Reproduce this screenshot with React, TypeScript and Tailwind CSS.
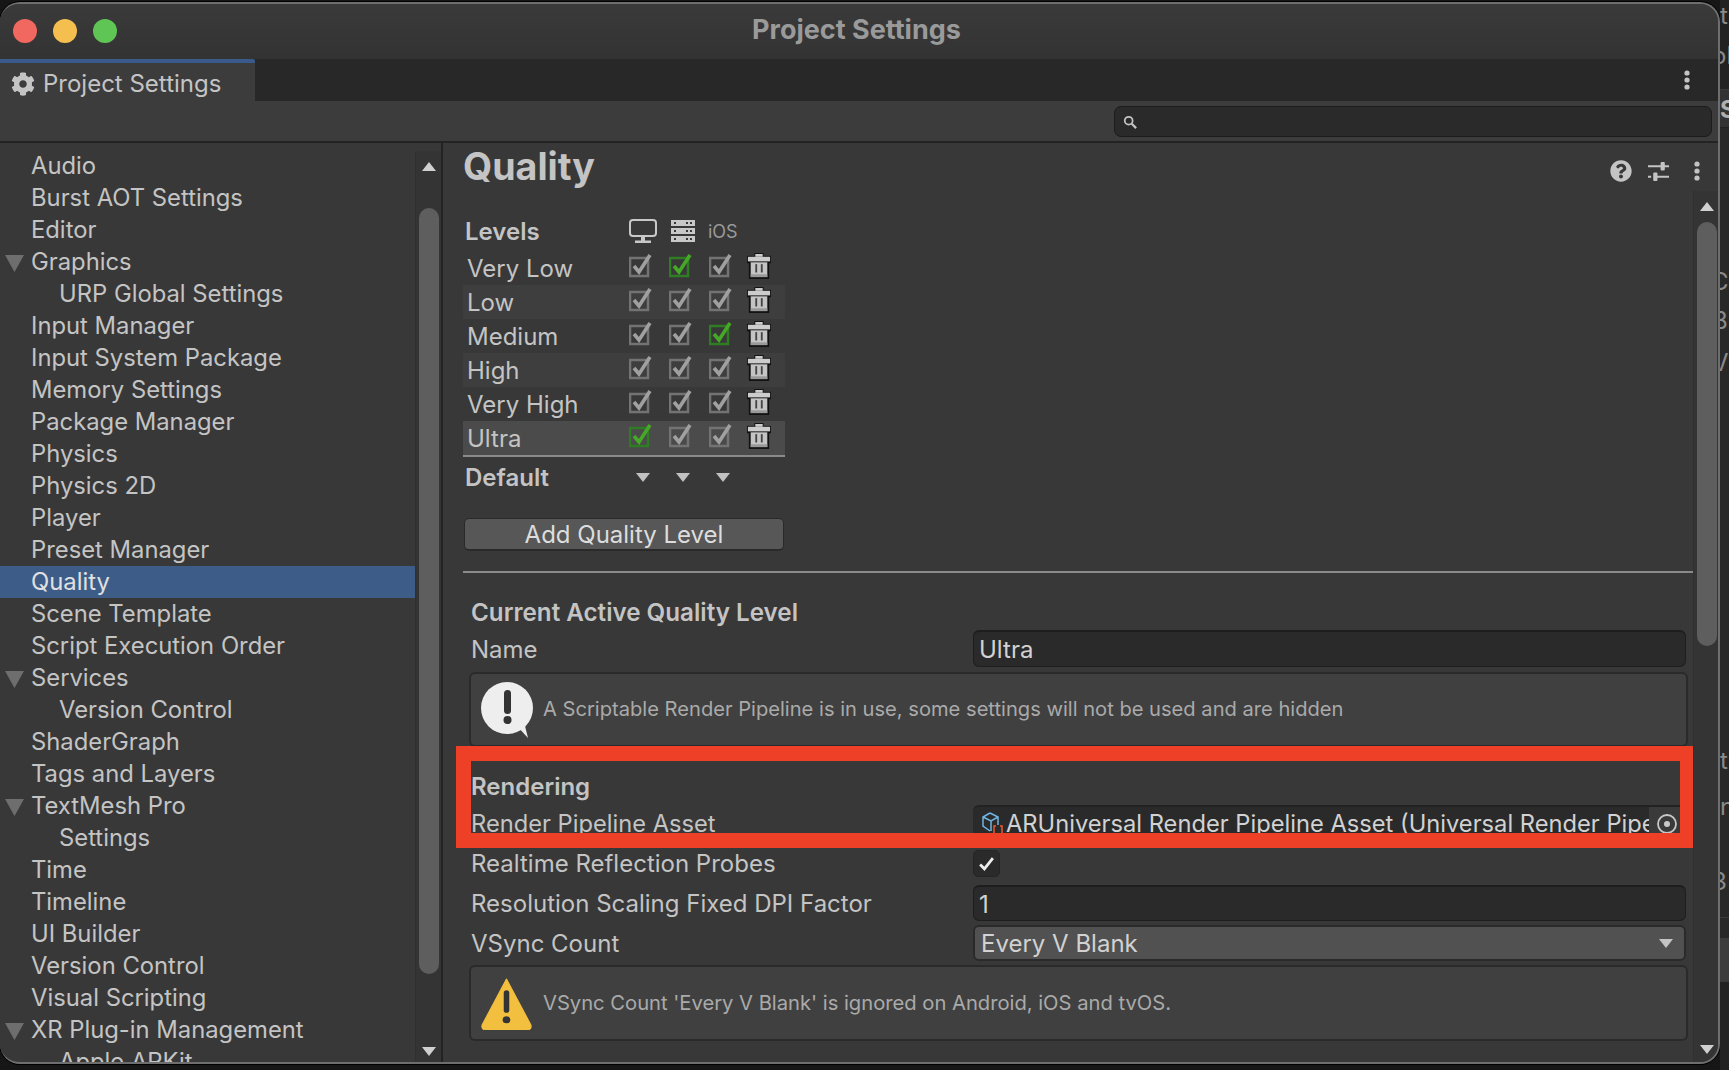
import React from "react";
import { FaCog, FaQuestionCircle } from "react-icons/fa";

const sidebarItems = [
  { name: "Audio" },
  { name: "Burst AOT Settings" },
  { name: "Editor" },
  { name: "Graphics", open: true },
  { name: "URP Global Settings", child: true },
  { name: "Input Manager" },
  { name: "Input System Package" },
  { name: "Memory Settings" },
  { name: "Package Manager" },
  { name: "Physics" },
  { name: "Physics 2D" },
  { name: "Player" },
  { name: "Preset Manager" },
  { name: "Quality", selected: true },
  { name: "Scene Template" },
  { name: "Script Execution Order" },
  { name: "Services", open: true },
  { name: "Version Control", child: true },
  { name: "ShaderGraph" },
  { name: "Tags and Layers" },
  { name: "TextMesh Pro", open: true },
  { name: "Settings", child: true },
  { name: "Time" },
  { name: "Timeline" },
  { name: "UI Builder" },
  { name: "Version Control" },
  { name: "Visual Scripting" },
  { name: "XR Plug-in Management", open: true },
  { name: "Apple ARKit", child: true },
];

const levels = [
  { name: "Very Low", green: 1, bg: "" },
  { name: "Low", green: -1, bg: "bg-[#3e3e3e]" },
  { name: "Medium", green: 2, bg: "" },
  { name: "High", green: -1, bg: "bg-[#3e3e3e]" },
  { name: "Very High", green: -1, bg: "" },
  { name: "Ultra", green: 0, bg: "bg-[#4b4b4b]" },
];

const TriDown = ({ className }: { className: string }) => (
  <svg viewBox="0 0 14 9" preserveAspectRatio="none" className={className}>
    <polygon points="0,0 14,0 7,9" fill="currentColor" />
  </svg>
);

const TriUp = ({ className }: { className: string }) => (
  <svg viewBox="0 0 14 9" className={className}>
    <polygon points="0,9 14,9 7,0" fill="currentColor" />
  </svg>
);

const Kebab = () => (
  <svg viewBox="0 0 6 20" className="w-[6px] h-[20px] text-[#c4c4c4]">
    <circle cx="3" cy="3" r="2.6" fill="currentColor" />
    <circle cx="3" cy="10" r="2.6" fill="currentColor" />
    <circle cx="3" cy="17" r="2.6" fill="currentColor" />
  </svg>
);

const LevelCheck = ({ green }: { green: boolean }) => (
  <svg viewBox="0 0 24 24" className="w-[24px] h-[24px]">
    <rect x="1" y="4" width="18" height="18" fill="none" stroke={green ? "#2f7d23" : "#737373"} strokeWidth="2.5" />
    <path d="M5 12 L10 18 L21 1" fill="none" stroke={green ? "#45a826" : "#a0a0a0"} strokeWidth="3.6" />
  </svg>
);

const Trash = () => (
  <svg viewBox="0 0 26 28" className="w-[24px] h-[26px]">
    <rect x="8" y="0" width="10" height="5" fill="#111111" />
    <rect x="0" y="3" width="26" height="8" fill="#111111" />
    <rect x="2" y="9" width="22" height="19" fill="#111111" />
    <rect x="9" y="1" width="8" height="3" fill="#cccccc" />
    <rect x="1" y="4" width="24" height="5" fill="#cccccc" />
    <rect x="4" y="10" width="18" height="16" fill="#c4c4c4" />
    <rect x="4" y="23" width="18" height="3" fill="#999999" />
    <rect x="9" y="12" width="2" height="9" fill="#444444" />
    <rect x="15" y="12" width="2" height="9" fill="#444444" />
  </svg>
);

const Scrollbar = ({
  thumbTop,
  thumbHeight,
  top,
  bottom,
}: {
  thumbTop: string;
  thumbHeight: string;
  top: string;
  bottom: string;
}) => (
  <div className={`w-[26px] shrink-0 flex flex-col items-center bg-[#343434] border-l border-[#303030] ${top}`}>
    <TriUp className="w-[14px] h-[9px] text-[#d0d0d0] mt-[11px]" />
    <div className={`w-[20px] rounded-full bg-[#5e5e5e] ${thumbTop} ${thumbHeight}`} />
    <TriDown className={`w-[14px] h-[9px] text-[#d0d0d0] mt-auto ${bottom}`} />
  </div>
);

const Label = ({ children }: { children: React.ReactNode }) => (
  <div className="w-[502px] shrink-0 mt-[2px] text-[24px] text-[#c4c4c4] whitespace-nowrap">{children}</div>
);

export default function App() {
  return (
    <div className="w-[1729px] h-[1070px] flex overflow-hidden bg-[#161616] font-[Inter,sans-serif] text-[#c4c4c4]">
      {/* window */}
      <div className="w-[1720px] h-[1062px] mt-[2px] shrink-0 flex flex-col overflow-hidden rounded-[20px] border-2 border-l-0 border-[#6e6e6e] bg-[#383838] shadow-[0_0_0_1px_#000]">
        {/* title bar */}
        <div className="h-[55px] shrink-0 relative flex items-center justify-center bg-gradient-to-b from-[#3a3a3a] to-[#333333]">
          <div className="absolute left-[13px] top-[15px] flex gap-[16px]">
            <div className="w-[24px] h-[24px] rounded-full bg-[#f0685f]" />
            <div className="w-[24px] h-[24px] rounded-full bg-[#f5bf4f]" />
            <div className="w-[24px] h-[24px] rounded-full bg-[#5fc655]" />
          </div>
          <span className="text-[27px] font-bold text-[#9a9a9a] ml-[-5px] mt-[-2px]">Project Settings</span>
        </div>

        {/* tab strip */}
        <div className="h-[42px] shrink-0 flex items-stretch justify-between bg-[#282828] pr-[28px]">
          <div className="w-[255px] flex items-center gap-[8px] pl-[11px] pt-[4px] bg-[#3c3c3c] border-t-4 border-[#3a5a8c] rounded-tr-[2px]">
            <FaCog className="w-[24px] h-[24px] text-[#c4c4c4]" />
            <span className="text-[24px] text-[#c4c4c4] whitespace-nowrap">Project Settings</span>
          </div>
          <div className="flex items-center">
            <Kebab />
          </div>
        </div>

        {/* toolbar */}
        <div className="h-[42px] shrink-0 flex items-start justify-end bg-[#3c3c3c] border-b-2 border-[#232323] pt-[5px] pr-[6px]">
          <div className="w-[598px] h-[31px] flex items-center pl-[8px] rounded-[7px] bg-[#2a2a2a] border border-[#1c1c1c]">
            <svg viewBox="0 0 16 16" className="w-[14px] h-[14px]">
              <circle cx="6.5" cy="6.5" r="4.5" fill="none" stroke="#c4c4c4" strokeWidth="2" />
              <path d="M10 10 L15 15" stroke="#c4c4c4" strokeWidth="2.5" />
            </svg>
          </div>
        </div>

        {/* body */}
        <div className="flex-1 min-h-0 flex">
          {/* sidebar */}
          <div className="w-[443px] shrink-0 flex border-r-2 border-[#232323] overflow-hidden">
            <div className="w-[415px] shrink-0 pt-[7px]">
              {sidebarItems.map((item, i) => (
                <div
                  key={i}
                  className={`h-[32px] flex items-center relative text-[23.8px] whitespace-nowrap ${
                    item.child ? "pl-[59px]" : "pl-[31px]"
                  } ${item.selected ? "bg-[#3d5c88] text-[#e0e0e0]" : "text-[#c4c4c4]"}`}
                >
                  {item.open && <TriDown className="absolute left-[5px] top-[9px] w-[19px] h-[17px] text-[#6e6e6e]" />}
                  {item.name}
                </div>
              ))}
            </div>
            <Scrollbar top="mt-[8px]" bottom="mb-[6px]" thumbTop="mt-[37px]" thumbHeight="h-[766px]" />
          </div>

          {/* main panel */}
          <div className="flex-1 min-w-0 flex flex-col">
            <div className="h-[48px] shrink-0 flex items-center justify-between pl-[20px] pr-[18px]">
              <span className="text-[37.6px] font-bold text-[#c4c4c4] leading-none mt-[-1px]">Quality</span>
              <div className="flex items-center mt-[8px]">
                <FaQuestionCircle className="w-[22px] h-[22px] text-[#c4c4c4] mr-[16px]" />
                <svg viewBox="0 0 20 20" className="w-[21px] h-[21px] mr-[25px]">
                  <path d="M0 5 H20 M0 15 H3 M7 15 H20" stroke="#c4c4c4" strokeWidth="2" />
                  <rect x="12" y="1" width="4" height="8" rx="1" fill="#c4c4c4" />
                  <rect x="5" y="11" width="4" height="8" rx="1" fill="#c4c4c4" />
                </svg>
                <Kebab />
              </div>
            </div>

            <div className="flex-1 min-h-0 flex">
              <div className="w-[1250px] shrink-0 overflow-hidden pl-[20px]">
                {/* levels table */}
                <div className="h-[34px] mt-[23px] flex items-center">
                  <div className="w-[166px] pl-[2px] pt-[2px] text-[24px] font-semibold text-[#c4c4c4]">Levels</div>
                  <div className="w-[40px]">
                    <svg viewBox="0 0 28 24" className="w-[28px] h-[24px]">
                      <rect x="1" y="1" width="26" height="16" rx="3" fill="none" stroke="#c8c8c8" strokeWidth="2" />
                      <rect x="12" y="17" width="4" height="5" fill="#c8c8c8" />
                      <rect x="6" y="21.5" width="16" height="2.5" fill="#c8c8c8" />
                    </svg>
                  </div>
                  <div className="w-[37px] ml-[2px]">
                    <svg viewBox="0 0 24 22" className="w-[24px] h-[22px]">
                      <rect x="0" y="0" width="24" height="6" fill="#c8c8c8" />
                      <rect x="0" y="8" width="24" height="6" fill="#c8c8c8" />
                      <rect x="0" y="16" width="24" height="6" fill="#c8c8c8" />
                      <rect x="3" y="2" width="2" height="2" fill="#383838" />
                      <rect x="15" y="2" width="2" height="2" fill="#383838" />
                      <rect x="19" y="2" width="2" height="2" fill="#383838" />
                      <rect x="3" y="10" width="2" height="2" fill="#383838" />
                      <rect x="15" y="10" width="2" height="2" fill="#383838" />
                      <rect x="19" y="10" width="2" height="2" fill="#383838" />
                      <rect x="3" y="18" width="2" height="2" fill="#383838" />
                      <rect x="15" y="18" width="2" height="2" fill="#383838" />
                      <rect x="19" y="18" width="2" height="2" fill="#383838" />
                    </svg>
                  </div>
                  <span className="text-[18px] text-[#999999]">iOS</span>
                </div>
                <div className="mt-[3px] w-[322px] border-b-2 border-[#8a8a8a] box-content">
                  {levels.map((lvl) => (
                    <div key={lvl.name} className={`h-[34px] flex items-center ${lvl.bg}`}>
                      <div className="w-[166px] pl-[4px] text-[24px] text-[#c4c4c4] mt-[2px]">{lvl.name}</div>
                      {[0, 1, 2].map((col) => (
                        <div key={col} className="w-[40px] mt-[-5px]">
                          <LevelCheck green={lvl.green === col} />
                        </div>
                      ))}
                      <div className="mt-[-5px] ml-[-2px]">
                        <Trash />
                      </div>
                    </div>
                  ))}
                </div>
                <div className="h-[34px] mt-[3px] flex items-center">
                  <div className="w-[173px] pl-[2px] pt-[2px] text-[24px] font-semibold text-[#c4c4c4]">Default</div>
                  <div className="flex gap-[26px]">
                    <TriDown className="w-[14px] h-[9px] text-[#c0c0c0]" />
                    <TriDown className="w-[14px] h-[9px] text-[#c0c0c0]" />
                    <TriDown className="w-[14px] h-[9px] text-[#c0c0c0]" />
                  </div>
                </div>
                <div className="w-[320px] h-[33px] ml-[1px] mt-[24px] pt-[2px] flex items-center justify-center rounded-[5px] bg-[#575757] border border-[#2a2a2a] border-b-2 text-[24px] text-[#dddddd]">
                  Add Quality Level
                </div>
                <div className="h-[2px] mt-[20px] bg-[#8a8a8a]" />

                {/* quality settings */}
                <div className="relative ml-[8px] w-[1215px]">
                  <div className="h-[32px] mt-[23px] pt-[2px] flex items-center text-[24.2px] font-semibold text-[#c4c4c4]">
                    Current Active Quality Level
                  </div>
                  <div className="h-[37px] mt-[2px] flex items-center">
                    <Label>Name</Label>
                    <div className="flex-1 h-full flex items-center pl-[5px] pt-[2px] rounded-[6px] bg-[#2a2a2a] border border-[#1e1e1e] border-t-2 text-[24px] text-[#d2d2d2]">
                      Ultra
                    </div>
                  </div>
                  <div className="h-[75px] mt-[5px] mx-[-2px] flex items-center rounded-[6px] bg-[#404040] border-2 border-[#2a2a2a] pl-[10px]">
                    <svg viewBox="0 0 52 56" className="w-[52px] h-[56px] shrink-0">
                      <circle cx="26" cy="26" r="26" fill="#eeeeee" />
                      <path d="M36 44 L47 56 L42 36 Z" fill="#eeeeee" />
                      <rect x="23" y="8" width="7" height="24" rx="3.5" fill="#333333" />
                      <circle cx="26.5" cy="38" r="4" fill="#333333" />
                    </svg>
                    <span className="ml-[10px] text-[20.14px] text-[#aaaaaa] whitespace-nowrap">
                      A Scriptable Render Pipeline is in use, some settings will not be used and are hidden
                    </span>
                  </div>
                  <div className="h-[32px] mt-[23px] pt-[2px] flex items-center text-[24px] font-semibold text-[#c4c4c4]">
                    Rendering
                  </div>
                  <div className="h-[36px] mt-[3px] flex items-center">
                    <Label>
                      <span className="text-[23.7px]">Render Pipeline Asset</span>
                    </Label>
                    <div className="flex-1 h-full flex items-center overflow-hidden rounded-[6px] bg-[#2a2a2a] border-t-2 border-[#222222]">
                      <div className="w-[676px] shrink-0 flex items-center pl-[9px] overflow-hidden">
                        <svg viewBox="0 0 22 26" className="w-[22px] h-[26px] shrink-0">
                          <path d="M8 2 L16 6 V14 M8 2 L1 6 V15 L8 20 M1 6 L9 10 L16 6 M9 10 V20" fill="none" stroke="#6fb6e4" strokeWidth="1.5" />
                          <path d="M14 15 H12 V24 H14 M18 15 H20 V24 H18" fill="none" stroke="#ee5a2c" strokeWidth="1.5" />
                        </svg>
                        <span className="ml-[2px] text-[23.7px] text-[#d2d2d2] whitespace-nowrap">
                          ARUniversal Render Pipeline Asset (Universal Render Pipeline Asset)
                        </span>
                      </div>
                      <div className="flex-1 h-full flex items-center pl-[8px] bg-[#3a3a3a]">
                        <svg viewBox="0 0 20 20" className="w-[20px] h-[20px]">
                          <circle cx="10" cy="10" r="9" fill="none" stroke="#c8c8c8" strokeWidth="1.8" />
                          <circle cx="10" cy="10" r="3" fill="#c8c8c8" />
                        </svg>
                      </div>
                    </div>
                  </div>
                  <div className="h-[28px] mt-[8px] flex items-center">
                    <Label>Realtime Reflection Probes</Label>
                    <div className="w-[27px] h-[27px] flex items-center justify-center rounded-[5px] bg-[#2a2a2a] border border-[#252525]">
                      <svg viewBox="0 0 16 16" className="w-[17px] h-[17px]">
                        <path d="M2 9 L6 13 L14 3" fill="none" stroke="#eeeeee" strokeWidth="2.6" />
                      </svg>
                    </div>
                  </div>
                  <div className="h-[36px] mt-[8px] flex items-center">
                    <Label>Resolution Scaling Fixed DPI Factor</Label>
                    <div className="flex-1 h-full flex items-center pl-[5px] pt-[2px] rounded-[6px] bg-[#2a2a2a] border border-[#1e1e1e] border-t-2 text-[24px] text-[#d2d2d2]">
                      1
                    </div>
                  </div>
                  <div className="h-[36px] mt-[4px] flex items-center">
                    <Label>VSync Count</Label>
                    <div className="flex-1 h-full flex items-center justify-between pl-[6px] pr-[11px] rounded-[6px] bg-[#515151] border-2 border-[#2a2a2a] text-[24px] text-[#d2d2d2]">
                      <span className="mt-[1px]">Every V Blank</span>
                      <TriDown className="w-[14px] h-[9px] text-[#c4c4c4]" />
                    </div>
                  </div>
                  <div className="h-[76px] mt-[4px] mx-[-2px] flex items-center rounded-[6px] bg-[#404040] border-2 border-[#2a2a2a] pl-[10px]">
                    <svg viewBox="0 0 46 52" preserveAspectRatio="none" className="w-[51px] h-[53px] shrink-0">
                      <path d="M23 2 L45 47 Q46 52 41 52 H5 Q0 52 1 47 Z" fill="#f3bf3f" stroke="#f3bf3f" strokeLinejoin="round" />
                      <rect x="20.5" y="13" width="5" height="22" rx="2.5" fill="#333333" />
                      <circle cx="23" cy="42" r="3.5" fill="#333333" />
                    </svg>
                    <span className="ml-[11px] text-[20.18px] text-[#aaaaaa] whitespace-nowrap">
                      VSync Count 'Every V Blank' is ignored on Android, iOS and tvOS.
                    </span>
                  </div>

                  {/* red highlight drawn over the screenshot */}
                  <div className="absolute left-[-15px] top-[150px] w-[1239px] h-[102px] border-[15px] border-[#ee4027]" />
                </div>
              </div>
              <Scrollbar top="" bottom="mb-[8px]" thumbTop="mt-[11px]" thumbHeight="h-[424px]" />
            </div>
          </div>
        </div>
      </div>

      {/* other editor window peeking out on the right */}
      <div className="flex-1 min-w-0 flex flex-col overflow-hidden whitespace-nowrap bg-[#282828] text-[24px] text-[#8a8a8a]">
        <div className="h-[90px] shrink-0 bg-[#222222] border-b border-[#3a3a3a] pt-[1px] leading-[30px]">
          <div>ti</div>
          <div className="ml-[-8px] mt-[10px]">ol</div>
        </div>
        <div className="h-[38px] shrink-0 pt-[4px] bg-[#333333] border-b border-[#222222] font-bold text-[#b0b0b0] leading-[32px]">S</div>
        <div className="h-[136px] shrink-0" />
        <div className="h-[39px] shrink-0 ml-[-9px]">C</div>
        <div className="h-[42px] shrink-0 ml-[-8px]">B</div>
        <div className="h-[398px] shrink-0 ml-[-8px]">V</div>
        <div className="h-[46px] shrink-0">ti</div>
        <div className="h-[75px] shrink-0">n</div>
        <div className="h-[54px] shrink-0 ml-[-8px] border-b border-[#3a3a3a]">3</div>
        <div className="h-[20px] shrink-0" />
        <div className="h-[43px] shrink-0 bg-[#3c3c3c]" />
        <div className="flex-1 bg-[#222222] border-t border-[#3a3a3a]" />
      </div>
    </div>
  );
}
